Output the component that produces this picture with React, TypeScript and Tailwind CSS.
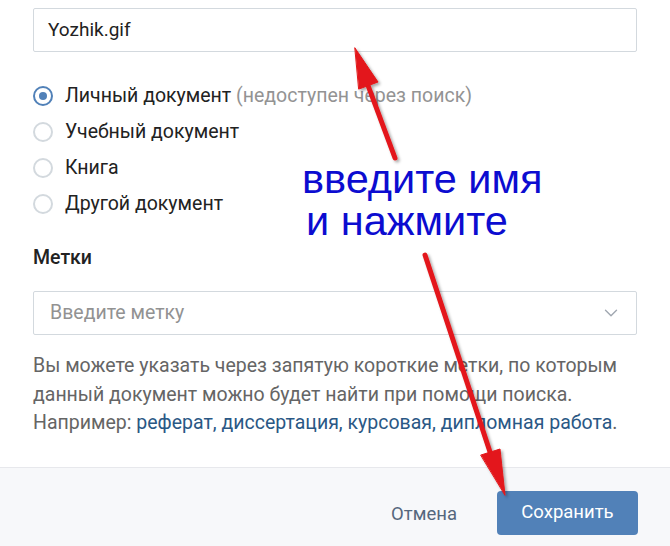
import { ChevronDown } from 'lucide-react'

const types = [
  { label: 'Личный документ', note: '(недоступен через поиск)', checked: true },
  { label: 'Учебный документ' },
  { label: 'Книга' },
  { label: 'Другой документ' },
]

function Radio({ checked }: { checked?: boolean }) {
  return (
    <span
      className={`flex h-[20px] w-[20px] shrink-0 items-center justify-center rounded-full border-2 ${
        checked ? 'border-[#5181b8]' : 'border-[#d3d9de]'
      }`}
    >
      {checked && <span className="h-[8px] w-[8px] rounded-full bg-[#5181b8]" />}
    </span>
  )
}

function Arrows() {
  return (
    <svg className="pointer-events-none absolute inset-0" width="670" height="546" viewBox="0 0 670 546">
      <defs>
        <filter id="sh" x="-20%" y="-20%" width="140%" height="140%">
          <feDropShadow dx="2" dy="2" stdDeviation="1.5" floodColor="#000" floodOpacity="0.35" />
        </filter>
      </defs>
      <g filter="url(#sh)" fill="#e3161a" stroke="#e3161a" strokeLinecap="round">
        <line x1="395" y1="158" x2="366" y2="80" strokeWidth="5" />
        <polygon points="355,48 378,82 359,89" strokeWidth="1" strokeLinejoin="round" />
        <line x1="425" y1="255" x2="492" y2="458" strokeWidth="5" />
        <polygon points="505,495 500,449 481,455" strokeWidth="1" strokeLinejoin="round" />
      </g>
    </svg>
  )
}

export default function App() {
  return (
    <div className="relative h-[546px] w-[670px] overflow-hidden bg-white font-['Roboto',sans-serif] text-[19.5px] text-[#222]">
      <div className="px-[33px] pt-[8px]">
        <div className="flex h-[44px] items-center rounded-[2px] border border-[#d3d9de] px-[14px] text-[19px]">
          Yozhik.gif
        </div>

        <div className="mt-[26px]">
          {types.map((t) => (
            <label key={t.label} className="flex h-[36px] items-center gap-[12px]">
              <Radio checked={t.checked} />
              <span>
                {t.label}
                {t.note && <span className="text-[#939393]"> {t.note}</span>}
              </span>
            </label>
          ))}
        </div>

        <div className="mt-[24px] h-[24px] font-medium leading-[24px]">Метки</div>

        <div className="mt-[21px] flex h-[44px] items-center justify-between rounded-[2px] border border-[#d3d9de] pl-[16px] pr-[14px]">
          <span className="text-[#929292]">Введите метку</span>
          <ChevronDown className="h-[22px] w-[22px] text-[#a0a7b0]" strokeWidth={1.5} />
        </div>

        <p className="mt-[17px] leading-[28.5px] text-[#656565]">
          Вы можете указать через запятую короткие метки, по которым данный документ можно будет найти при помощи
          поиска.
          <br />
          Например: <span className="text-[#2a5885]">реферат, диссертация, курсовая, дипломная работа</span>.
        </p>
      </div>

      <div className="absolute inset-x-0 bottom-0 flex h-[79px] items-start justify-end gap-[40px] border-t border-[#e7e8ec] bg-[#f7f8fa] pr-[32px] pt-[23px] text-[18.5px]">
        <button className="mt-[10px] text-[#55677d]">Отмена</button>
        <button className="h-[44px] w-[141px] rounded-[4px] bg-[#5181b8] text-white">Сохранить</button>
      </div>

      <Arrows />

      <div className="pointer-events-none absolute left-[302px] top-[158px] font-['Liberation_Sans',Arial,sans-serif] text-[41.5px] leading-[42px] text-[#0c0cd0]">
        <div>введите имя</div>
        <div className="pl-[4px]">и нажмите</div>
      </div>
    </div>
  )
}
